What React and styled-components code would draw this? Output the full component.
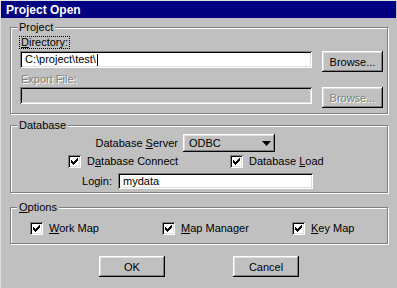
import React from 'react';
import styled, { createGlobalStyle } from 'styled-components';

const GlobalStyle = createGlobalStyle`
  html, body {
    margin: 0;
    padding: 0;
    background: #c0c0c0;
  }
  body {
    font-family: "Liberation Sans", Arial, sans-serif;
    font-size: 11px;
    color: #000;
  }
`;

const raised = `
  box-shadow: inset -1px -1px 0 #000, inset 1px 1px 0 #fff,
    inset -2px -2px 0 #808080, inset 2px 2px 0 #dfdfdf;
`;

const sunken = `
  box-shadow: inset 1px 1px 0 #808080, inset -1px -1px 0 #fff,
    inset 2px 2px 0 #000, inset -2px -2px 0 #dfdfdf;
`;

const Window = styled.div`
  width: 397px;
  height: 288px;
  box-sizing: border-box;
  background: #c0c0c0;
  border-top: 1px solid #dfdfdf;
  border-left: 1px solid #dfdfdf;
  padding-right: 1px;
  overflow: hidden;
`;

const TitleBar = styled.div`
  height: 17px;
  box-sizing: border-box;
  padding: 1px 0 0 5px;
  background: #000080;
  color: #fff;
  font-weight: bold;
  font-size: 12px;
  line-height: 17px;
  white-space: nowrap;
`;

const Body = styled.div`
  padding: 0 8px 0 9px;
`;

const Group = styled.div`
  position: relative;
  box-sizing: border-box;
  width: 378px;
  margin-top: ${(p) => p.$mt}px;
  padding: ${(p) => p.$pt}px 0 ${(p) => p.$pb}px 9px;
  border: 1px solid #808080;
  box-shadow: inset 1px 1px 0 #fff, 1px 1px 0 #fff;
`;

const Legend = styled.span`
  position: absolute;
  top: -7px;
  left: 6px;
  padding: 0 2px;
  background: #c0c0c0;
  line-height: 13px;
  white-space: nowrap;
`;

const FocusLabel = styled.div`
  display: inline-block;
  margin: ${(p) => p.$mt}px 0 0 -1px;
  border: 1px dotted #000;
  padding: 0 1px;
  line-height: 11px;
`;

const Label = styled.div`
  margin: ${(p) => p.$mt}px 0 0 1px;
  line-height: 13px;
  color: ${(p) => (p.$disabled ? '#808080' : '#000')};
  text-shadow: ${(p) => (p.$disabled ? '1px 1px 0 #fff' : 'none')};
`;

const Row = styled.div`
  display: flex;
  align-items: ${(p) => p.$align || 'flex-start'};
  margin-top: ${(p) => p.$mt}px;
  padding-left: ${(p) => p.$pl || 0}px;
`;

const Field = styled.div`
  box-sizing: border-box;
  width: ${(p) => p.$w}px;
  height: ${(p) => p.$h}px;
  margin-left: ${(p) => p.$ml || 0}px;
  padding-left: 5px;
  background: ${(p) => (p.$disabled ? '#c0c0c0' : '#fff')};
  ${sunken}
  line-height: ${(p) => p.$h}px;
  white-space: nowrap;
  display: flex;
  align-items: center;
`;

const Caret = styled.span`
  display: inline-block;
  width: 1px;
  height: 12px;
  margin-left: 1px;
  background: #000;
`;

const Button = styled.button`
  box-sizing: border-box;
  width: ${(p) => p.$w}px;
  height: 21px;
  margin-left: ${(p) => p.$ml || 0}px;
  padding: 0;
  border: none;
  background: #c0c0c0;
  ${raised}
  font-family: "Liberation Sans", Arial, sans-serif;
  font-size: 11px;
  color: ${(p) => (p.disabled ? '#808080' : '#000')};
  text-shadow: ${(p) => (p.disabled ? '1px 1px 0 #fff' : 'none')};
  flex-shrink: 0;
`;

const LabelCell = styled.div`
  width: ${(p) => p.$w}px;
  text-align: right;
  line-height: 13px;
  white-space: nowrap;
`;

const Select = styled.div`
  box-sizing: border-box;
  width: 92px;
  height: 18px;
  margin-left: 5px;
  padding: 0 4px 0 6px;
  background: #c0c0c0;
  ${raised}
  display: flex;
  align-items: center;
  justify-content: space-between;
`;

const CheckItem = styled.label`
  display: flex;
  align-items: center;
  width: ${(p) => (p.$w ? `${p.$w}px` : 'auto')};
  line-height: 13px;
  white-space: nowrap;
`;

const Box = styled.span`
  position: relative;
  box-sizing: border-box;
  width: 13px;
  height: 13px;
  margin-right: 6px;
  background: #fff;
  ${sunken}
  flex-shrink: 0;
`;

const Mark = styled.svg`
  position: absolute;
  left: 3px;
  top: 3px;
`;

const Footer = styled.div`
  display: flex;
  margin-top: 12px;
  padding-left: 89px;
`;

const CHECK = [
  [0, 2], [1, 3], [2, 4], [3, 3], [4, 2], [5, 1], [6, 0],
];

function Checkbox({ width, children }) {
  return (
    <CheckItem $w={width}>
      <Box>
        <Mark width="7" height="7" viewBox="0 0 7 7" shapeRendering="crispEdges">
          {CHECK.map(([x, y]) => (
            <rect key={x} x={x} y={y} width="1" height="3" fill="#000" />
          ))}
        </Mark>
      </Box>
      <span>{children}</span>
    </CheckItem>
  );
}

export default function App() {
  return (
    <>
      <GlobalStyle />
      <Window>
        <TitleBar>Project Open</TitleBar>
        <Body>
          <Group $mt={9} $pt={0} $pb={5}>
            <Legend>Project</Legend>
            <FocusLabel $mt={8}>
              <u>D</u>irectory:
            </FocusLabel>
            <Row $mt={2}>
              <Field $w={292} $h={17}>
                C:\project\test\
                <Caret />
              </Field>
              <Button $w={61} $ml={10}>Browse...</Button>
            </Row>
            <Label $mt={1} $disabled>
              Export File:
            </Label>
            <Row $mt={1}>
              <Field $w={292} $h={17} $disabled />
              <Button $w={61} $ml={10} disabled>
                Browse...
              </Button>
            </Row>
          </Group>

          <Group $mt={11} $pt={0} $pb={3}>
            <Legend>Database</Legend>
            <Row $mt={8} $align="center">
              <LabelCell $w={158}>
                Database <u>S</u>erver
              </LabelCell>
              <Select>
                <span>ODBC</span>
                <svg width="9" height="5" viewBox="0 0 9 5">
                  <polygon points="0,0 9,0 4.5,5" fill="#000" />
                </svg>
              </Select>
            </Row>
            <Row $mt={3} $pl={48}>
              <Checkbox width={162}>
                D<u>a</u>tabase Connect
              </Checkbox>
              <Checkbox>
                Database <u>L</u>oad
              </Checkbox>
            </Row>
            <Row $mt={5} $align="center">
              <LabelCell $w={92}>Login:</LabelCell>
              <Field $w={195} $h={16} $ml={6}>
                mydata
              </Field>
            </Row>
          </Group>

          <Group $mt={14} $pt={14} $pb={8}>
            <Legend>
              <u>O</u>ptions
            </Legend>
            <Row $pl={10}>
              <Checkbox width={132}>
                <u>W</u>ork Map
              </Checkbox>
              <Checkbox width={130}>
                <u>M</u>ap Manager
              </Checkbox>
              <Checkbox>
                <u>K</u>ey Map
              </Checkbox>
            </Row>
          </Group>

          <Footer>
            <Button $w={66}>OK</Button>
            <Button $w={66} $ml={68}>Cancel</Button>
          </Footer>
        </Body>
      </Window>
    </>
  );
}
